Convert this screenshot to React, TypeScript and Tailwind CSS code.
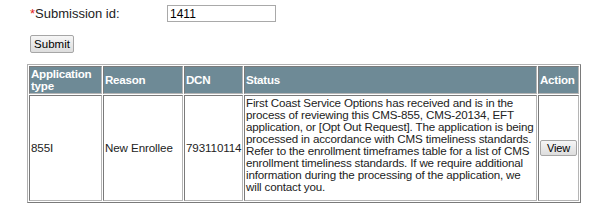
import React from "react";

const font = { fontFamily: '"Liberation Sans", Arial, sans-serif' };

const headers = [
  { label: "Application type", w: "w-[73px]" },
  { label: "Reason", w: "w-[80px]" },
  { label: "DCN", w: "w-[59px]" },
  { label: "Status", w: "w-[293px]" },
  { label: "Action", w: "w-[41px]" },
];

const statusText =
  "First Coast Service Options has received and is in the process of reviewing this CMS-855, CMS-20134, EFT application, or [Opt Out Request]. The application is being processed in accordance with CMS timeliness standards. Refer to the enrollment timeframes table for a list of CMS enrollment timeliness standards. If we require additional information during the processing of the application, we will contact you.";

const cell = "border border-t-[#7a7a7a] border-l-[#7a7a7a] border-r-[#b5b5b5] border-b-[#b5b5b5] px-[1px] leading-[12px]";

export default function App() {
  return (
    <div className="min-h-[203px] w-[616px] bg-white text-[#222]" style={font}>
      <div className="flex items-center pl-[30px] pt-[5px]">
        <label className="w-[137px] text-[13px] leading-[16px] text-[#222]">
          <span className="text-[#e02020]">*</span>Submission id:
        </label>
        <input
          defaultValue="1411"
          className="h-[17px] w-[109px] border border-[#a9a9a9] bg-white px-[2px] text-[12px] text-black outline-none"
          style={font}
        />
      </div>

      <div className="flex pl-[30px] pt-[13px]">
        <button
          className="block h-[18px] w-[44px] rounded-[2px] border border-[#a6a6a6] bg-gradient-to-b from-[#f6f6f6] to-[#dddddd] text-[11.5px] leading-[14px] text-black"
          style={font}
        >
          Submit
        </button>
      </div>

      <div className="flex pl-[27px] pt-[11px]">
        <table className="w-[554px] table-fixed border-separate border-spacing-[1px] border border-t-[#b0b0b0] border-l-[#b0b0b0] border-r-[#7a7a7a] border-b-[#7a7a7a] text-[11.6px] tracking-[-0.1px]">
          <thead>
            <tr>
              {headers.map((h) => (
                <th
                  key={h.label}
                  className={`${h.w} ${cell} h-[28px] bg-[#6e8a96] text-left align-middle font-bold tracking-[-0.25px] text-white`}
                >
                  {h.label}
                </th>
              ))}
            </tr>
          </thead>
          <tbody>
            <tr>
              <td className={`${cell} h-[106px] align-middle`}>855I</td>
              <td className={`${cell} align-middle`}>New Enrollee</td>
              <td className={`${cell} align-middle`}>793110114</td>
              <td className={`${cell} pt-[1px] pb-[6px] align-top tracking-[-0.16px]`}>{statusText}</td>
              <td className={`${cell} text-center align-middle`}>
                <button
                  className="h-[16px] w-[37px] rounded-[2px] border border-[#a6a6a6] bg-gradient-to-b from-[#f6f6f6] to-[#dddddd] text-[11px] leading-[13px] text-black"
                  style={font}
                >
                  View
                </button>
              </td>
            </tr>
          </tbody>
        </table>
      </div>
    </div>
  );
}
